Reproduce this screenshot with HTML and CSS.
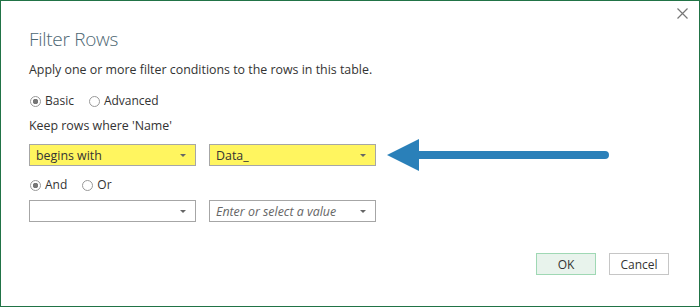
FILE: index.html
```html
<!DOCTYPE html>
<html lang="en">
<head>
    <meta charset="UTF-8">
    <title>Filter Rows</title>
    <link rel="stylesheet" href="styles.css">
</head>
<body>

<div class="dialog">
    <button class="close" type="button" aria-label="Close">
        <svg width="11" height="11" viewBox="0 0 11 11"><path d="M0.5 0.5 L10.5 10.5 M10.5 0.5 L0.5 10.5" stroke="#777" stroke-width="1.2"/></svg>
    </button>

    <h1>Filter Rows</h1>
    <p class="intro">Apply one or more filter conditions to the rows in this table.</p>

    <div class="radios">
        <label class="radio"><span class="dot checked"></span>Basic</label>
        <label class="radio"><span class="dot"></span>Advanced</label>
    </div>

    <p class="keep">Keep rows where 'Name'</p>

    <div class="row first">
        <div class="select highlight"><span>begins with</span><i class="caret"></i></div>
        <div class="select highlight"><span>Data_</span><i class="caret"></i></div>
        <svg class="arrow" width="224" height="34" viewBox="0 0 224 34">
            <path d="M0 17 L32 1 L32 13 L218 13 A4 4 0 0 1 218 21 L32 21 L32 33 Z" fill="#2a80b9"/>
        </svg>
    </div>

    <div class="radios small">
        <label class="radio"><span class="dot checked"></span>And</label>
        <label class="radio"><span class="dot"></span>Or</label>
    </div>

    <div class="row">
        <div class="select"><span></span><i class="caret"></i></div>
        <div class="select"><span class="placeholder">Enter or select a value</span><i class="caret"></i></div>
    </div>

    <div class="actions">
        <button class="btn ok" type="button">OK</button>
        <button class="btn" type="button">Cancel</button>
    </div>
</div>

</body>
</html>
```

FILE: styles.css
```css
body {
    margin: 0;
    font-family: "Open Sans", "Liberation Sans", sans-serif;
    color: #333;
    background-color: #fff;
}

.dialog {
    position: relative;
    box-sizing: border-box;
    width: 700px;
    height: 307px;
    border: 1px solid #217346;
    padding: 0 0 0 28px;
    background-color: #fff;
}

.close {
    position: absolute;
    top: 7px;
    right: 11px;
    padding: 0;
    border: none;
    background: none;
    line-height: 0;
}

h1 {
    margin: 0;
    padding-top: 24px;
    font-size: 19px;
    font-weight: 300;
    letter-spacing: -0.3px;
    line-height: 28px;
    color: #4d6773;
}

.intro {
    margin: 8px 0 0;
    font-size: 12.4px;
    line-height: 18px;
}

.radios {
    display: flex;
    gap: 14px;
    margin-top: 13px;
    font-size: 12px;
    line-height: 18px;
}

.radios.small {
    margin-top: 4px;
}

.radio {
    display: flex;
    align-items: center;
}

.dot {
    box-sizing: border-box;
    width: 11px;
    height: 11px;
    margin: 0 4px 0 1px;
    border: 1px solid #999;
    border-radius: 50%;
    background-color: #fff;
}

.dot.checked {
    background: radial-gradient(circle, #777 0, #777 2.5px, #fff 3px);
}

.keep {
    margin: 7px 0 0;
    font-size: 12.4px;
    line-height: 18px;
}

.row {
    display: flex;
    align-items: center;
    gap: 13px;
    margin-top: 6px;
}

.row.first {
    margin-top: 3px;
}

.select {
    box-sizing: border-box;
    display: flex;
    align-items: center;
    justify-content: space-between;
    width: 167px;
    height: 22px;
    padding: 0 9px 0 6px;
    border: 1px solid #a6a6a6;
    background-color: #fff;
    font-size: 12.4px;
}

.select.highlight {
    background-color: #fff55f;
}

.placeholder {
    font-style: italic;
    color: #666;
}

.caret {
    width: 0;
    height: 0;
    border-left: 3px solid transparent;
    border-right: 3px solid transparent;
    border-top: 3px solid #666;
}

.arrow {
    margin-left: -2px;
}

.actions {
    display: flex;
    justify-content: flex-end;
    gap: 13px;
    margin-top: 31px;
    padding-right: 30px;
}

.btn {
    box-sizing: border-box;
    width: 60px;
    height: 22px;
    padding: 0;
    border: 1px solid #c6c6c6;
    background-color: #fff;
    font-family: "Open Sans", "Liberation Sans", sans-serif;
    font-size: 12px;
    color: #333;
}

.btn.ok {
    border-color: #9fd8b4;
    background-color: #e8f3ec;
}
```
